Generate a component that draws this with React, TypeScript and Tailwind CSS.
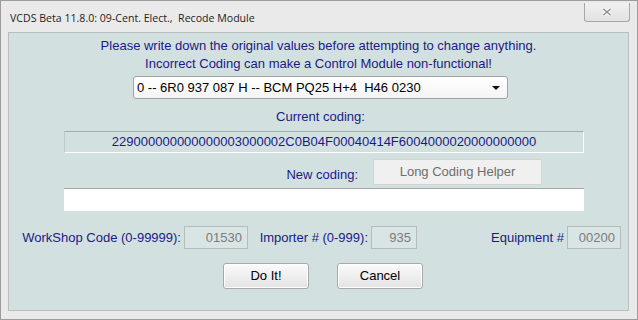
const navy = 'text-[#1a1a86]';

function FieldBox({ value, w }: { value: string; w: string }) {
  return (
    <div
      className={`${w} h-[23px] border border-[#b4bcbc] bg-[#d9e4e4] pr-[5px] text-right leading-[21px] text-[#7c7c7c]`}
    >
      {value}
    </div>
  );
}

function PushButton({ label }: { label: string }) {
  return (
    <button className="h-[26px] w-[86px] rounded-[3px] border border-[#a9a9a9] bg-gradient-to-b from-[#fbfbfb] to-[#e3e3e3] text-[13px] text-black shadow-[inset_0_0_0_1px_#ffffff]">
      {label}
    </button>
  );
}

export default function App() {
  return (
    <div className="flex h-[320px] w-[638px] flex-col border border-[#9c9c9c] bg-[#eaeaea] font-['Liberation_Sans',Arial,sans-serif] text-[13px]">
      {/* title bar */}
      <div className="flex h-[31px] items-start justify-between">
        <div className="mt-[9px] ml-[9px] whitespace-pre font-['Open_Sans',sans-serif] text-[10.6px] leading-[16px] text-[#1e1e1e]">
          VCDS Beta 11.8.0: 09-Cent. Elect.,  Recode Module
        </div>
        <div className="mt-[2px] mr-[7px] flex h-[19px] w-[46px] items-center justify-center rounded-b-[3px] border border-t-0 border-[#a7a7a7] bg-gradient-to-b from-[#f0f0f0] to-[#e2e2e2]">
          <svg width="10" height="8" viewBox="0 0 10 8">
            <path d="M1.5 1 L8.5 7 M8.5 1 L1.5 7" stroke="#ffffff" strokeWidth="3.2" />
            <path d="M1.5 1 L8.5 7 M8.5 1 L1.5 7" stroke="#8a8a8a" strokeWidth="1.5" />
          </svg>
        </div>
      </div>

      {/* client area */}
      <div className={`mr-[8px] ml-[7px] flex h-[279px] flex-col border border-[#b9bdbd] bg-[#d3e0e0] ${navy}`}>
        <div className="mt-[4px] text-center leading-[18px]">
          <div>Please write down the original values before attempting to change anything.</div>
          <div>Incorrect Coding can make a Control Module non-functional!</div>
        </div>

        <div className="mt-[3px] ml-[124px] flex h-[23px] w-[375px] items-center justify-between rounded-[3px] border border-[#a3a3a3] bg-gradient-to-b from-white to-[#f4f4f4] pr-[7px] pl-[3px] text-black">
          <span className="whitespace-pre">0 -- 6R0 937 087 H -- BCM PQ25 H+4  H46 0230</span>
          <svg width="8" height="4" viewBox="0 0 8 4">
            <path d="M0 0 L8 0 L4 4 Z" fill="#111" />
          </svg>
        </div>

        <div className="mt-[9px] pl-[4px] text-center leading-[18px]">Current coding:</div>

        <div className="mt-[5px] ml-[55px] h-[22px] w-[520px] border border-t-[#a4acac] border-r-white border-b-white border-l-[#c0c8c8] text-center leading-[20px]">
          229000000000000003000002C0B04F00040414F6004000020000000000
        </div>

        <div className="mt-[6px] flex h-[26px]">
          <div className="w-[349px] pt-[7px] text-right leading-[18px]">New coding:</div>
          <button className="ml-[15px] h-[26px] w-[169px] border border-[#d4d4d4] bg-[#f0f0f0] text-[13px] text-[#6d6d6d]">
            Long Coding Helper
          </button>
        </div>

        <div className="mt-[3px] ml-[55px] h-[23px] w-[520px] border-t border-[#a8a8a8] bg-white" />

        <div className="mt-[15px] flex h-[23px] items-center">
          <div className="w-[172px] text-right">WorkShop Code (0-99999):</div>
          <div className="ml-[3px]">
            <FieldBox value="01530" w="w-[64px]" />
          </div>
          <div className="w-[120px] text-right">Importer # (0-999):</div>
          <div className="ml-[3px]">
            <FieldBox value="935" w="w-[46px]" />
          </div>
          <div className="w-[147px] text-right">Equipment #</div>
          <div className="ml-[3px]">
            <FieldBox value="00200" w="w-[54px]" />
          </div>
        </div>

        <div className="mt-[14px] flex">
          <div className="ml-[214px]">
            <PushButton label="Do It!" />
          </div>
          <div className="ml-[28px]">
            <PushButton label="Cancel" />
          </div>
        </div>
      </div>
    </div>
  );
}
